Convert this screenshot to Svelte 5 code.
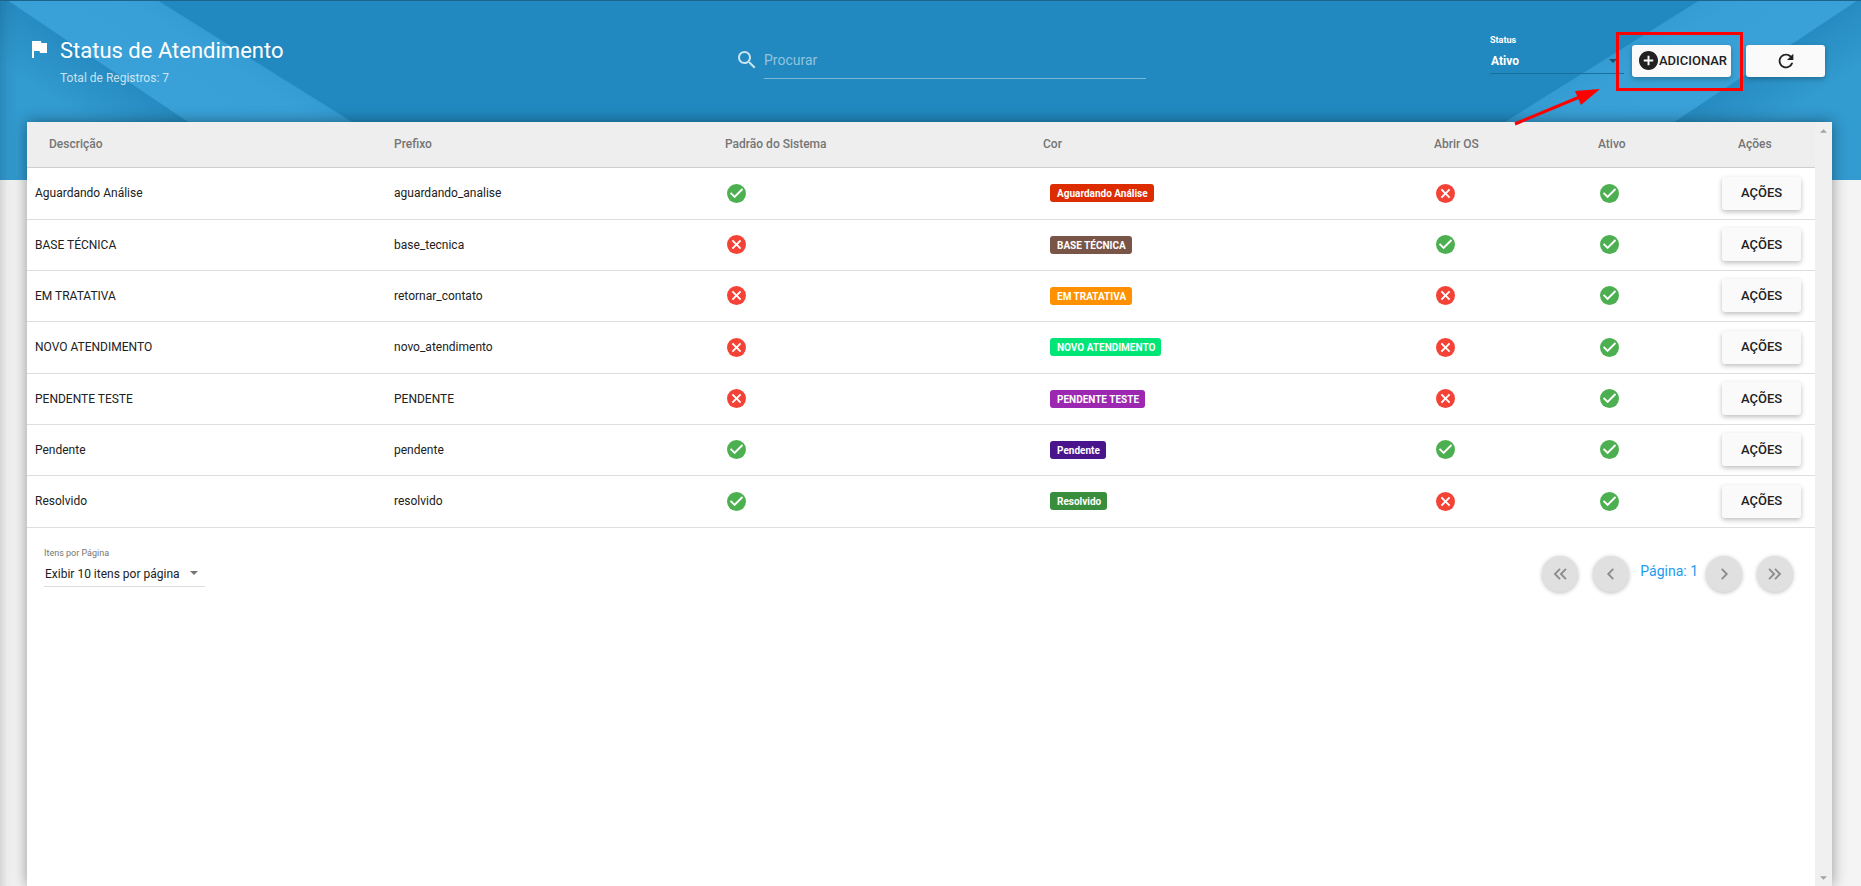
<script>
  const rows = [
    { name: 'Aguardando Análise', prefix: 'aguardando_analise', system: true, color: '#dd2c00', order: false, active: true },
    { name: 'BASE TÉCNICA', prefix: 'base_tecnica', system: false, color: '#795548', order: true, active: true },
    { name: 'EM TRATATIVA', prefix: 'retornar_contato', system: false, color: '#ff9100', order: false, active: true },
    { name: 'NOVO ATENDIMENTO', prefix: 'novo_atendimento', system: false, color: '#00e676', order: false, active: true },
    { name: 'PENDENTE TESTE', prefix: 'PENDENTE', system: false, color: '#9c27b0', order: false, active: true },
    { name: 'Pendente', prefix: 'pendente', system: true, color: '#4a148c', order: true, active: true },
    { name: 'Resolvido', prefix: 'resolvido', system: true, color: '#388e3c', order: false, active: true }
  ];
  const headings = ['Descrição', 'Prefixo', 'Padrão do Sistema', 'Cor', 'Abrir OS', 'Ativo', 'Ações'];
</script>

{#snippet flag(on)}
  {#if on}
    <svg class="state" viewBox="2 2 20 20" role="img" aria-label="Sim">
      <circle cx="12" cy="12" r="10" fill="#4caf50" />
      <path fill="#fff" d="M10 17l-5-5 1.41-1.41L10 14.17l7.59-7.59L19 8z" />
    </svg>
  {:else}
    <svg class="state" viewBox="2 2 20 20" role="img" aria-label="Não">
      <circle cx="12" cy="12" r="10" fill="#f44336" />
      <path fill="#fff" d="M17 15.59L15.59 17 12 13.41 8.41 17 7 15.59 10.59 12 7 8.41 8.41 7 12 10.59 15.59 7 17 8.41 13.41 12z" />
    </svg>
  {/if}
{/snippet}

<div class="page">
  <header>
    <svg class="ribbon left" viewBox="0 0 460 180" aria-hidden="true">
      <defs>
        <linearGradient id="foldL" gradientUnits="userSpaceOnUse" x1="98" y1="61" x2="66" y2="109">
          <stop offset="0" stop-color="#268bc0" />
          <stop offset="1" stop-color="#329bd0" />
        </linearGradient>
        <linearGradient id="bandL" gradientUnits="userSpaceOnUse" x1="98" y1="61" x2="156" y2="-30">
          <stop offset="0" stop-color="#39a1d7" />
          <stop offset="0.6" stop-color="#38a0d6" />
          <stop offset="1" stop-color="#2f98ce" />
        </linearGradient>
      </defs>
      <path d="M0 0H7L274 180H0Z" fill="url(#foldL)" />
      <path d="M7 0H157L445 180H274Z" fill="url(#bandL)" />
    </svg>
    <svg class="ribbon right" viewBox="0 0 460 180" aria-hidden="true">
      <defs>
        <linearGradient id="foldR" gradientUnits="userSpaceOnUse" x1="364" y1="61" x2="396" y2="109">
          <stop offset="0" stop-color="#268bc0" />
          <stop offset="1" stop-color="#329bd0" />
        </linearGradient>
        <linearGradient id="bandR" gradientUnits="userSpaceOnUse" x1="364" y1="61" x2="306" y2="-30">
          <stop offset="0" stop-color="#39a1d7" />
          <stop offset="0.6" stop-color="#38a0d6" />
          <stop offset="1" stop-color="#2f98ce" />
        </linearGradient>
      </defs>
      <path d="M460 0H457L186 180H460Z" fill="url(#foldR)" />
      <path d="M457 0H299L11 180H186Z" fill="url(#bandR)" />
    </svg>

    <div class="toolbar">
      <div class="heading">
        <svg class="icon" viewBox="0 0 24 24" aria-hidden="true"><path d="M14.4 6L14 4H5v17h2v-7h5.6l.4 2h7V6z" /></svg>
        <div>
          <h1>Status de Atendimento</h1>
          <p>Total de Registros: 7</p>
        </div>
      </div>

      <label class="search">
        <svg class="icon" viewBox="0 0 24 24" role="img" aria-label="Procurar">
          <path d="M15.5 14h-.79l-.28-.27C15.41 12.59 16 11.11 16 9.5 16 5.91 13.09 3 9.5 3S3 5.91 3 9.5 5.91 16 9.5 16c1.61 0 3.09-.59 4.23-1.57l.27.28v.79l5 4.99L20.49 19l-4.99-5zm-6 0C7.01 14 5 11.99 5 9.5S7.01 5 9.5 5 14 7.01 14 9.5 11.99 14 9.5 14z" />
        </svg>
        <input type="search" placeholder="Procurar" />
      </label>

      <div class="tools">
        <div class="field status">
          <label for="status">Status</label>
          <select id="status"><option>Ativo</option></select>
          <svg class="caret" viewBox="0 0 8 4" aria-hidden="true"><path d="M0 0h8L4 4z" /></svg>
        </div>
        <div class="marked">
          <button class="btn add">
            <svg viewBox="2 2 20 20" aria-hidden="true"><path d="M12 2C6.48 2 2 6.48 2 12s4.48 10 10 10 10-4.48 10-10S17.52 2 12 2zm5 11h-4v4h-2v-4H7v-2h4V7h2v4h4v2z" /></svg>ADICIONAR
          </button>
          <span class="frame"></span>
          <svg class="arrow" viewBox="0 0 90 40" aria-hidden="true">
            <path d="M3 36L70 8" stroke="#f00" stroke-width="3" />
            <path d="M88 1L63 3L69 17Z" fill="#f00" />
          </svg>
        </div>
        <button class="btn refresh" aria-label="Atualizar">
          <svg viewBox="0 0 24 24" aria-hidden="true"><path d="M17.65 6.35C16.2 4.9 14.21 4 12 4c-4.42 0-7.99 3.58-7.99 8s3.57 8 7.99 8c3.73 0 6.84-2.55 7.73-6h-2.08c-.82 2.33-3.04 4-5.65 4-3.31 0-6-2.69-6-6s2.69-6 6-6c1.66 0 3.14.69 4.22 1.78L13 11h7V4l-2.35 2.35z" /></svg>
        </button>
      </div>
    </div>
  </header>

  <main>
    <div class="content">
      <table>
        <colgroup>
          <col class="c1" /><col class="c2" /><col class="c3" /><col class="c4" /><col class="c5" /><col class="c6" /><col class="c7" />
        </colgroup>
        <thead>
          <tr>{#each headings as h}<th scope="col">{h}</th>{/each}</tr>
        </thead>
        <tbody>
          {#each rows as row}
            <tr>
              <td>{row.name}</td>
              <td>{row.prefix}</td>
              <td class="mark">{@render flag(row.system)}</td>
              <td class="tag"><span class="badge" style="background:{row.color}">{row.name}</span></td>
              <td class="mark">{@render flag(row.order)}</td>
              <td class="mark">{@render flag(row.active)}</td>
              <td><button class="btn action">AÇÕES</button></td>
            </tr>
          {/each}
        </tbody>
      </table>

      <footer>
        <div class="field size">
          <label for="size">Itens por Página</label>
          <select id="size"><option>Exibir 10 itens por página</option></select>
          <svg class="caret" viewBox="0 0 8 4" aria-hidden="true"><path d="M0 0h8L4 4z" /></svg>
        </div>
        <nav aria-label="Paginação">
          <button class="round" aria-label="Primeira"><svg viewBox="0 0 24 24"><path d="M12 6.5L6.5 12l5.5 5.5M18.500 6.500L13 12l5.500 5.500" /></svg></button>
          <button class="round" aria-label="Anterior"><svg viewBox="0 0 24 24"><path d="M14.500 6.500L9 12l5.500 5.500" /></svg></button>
          <span>Página: 1</span>
          <button class="round" aria-label="Próxima"><svg viewBox="0 0 24 24"><path d="M9.500 6.500L15 12l-5.500 5.500" /></svg></button>
          <button class="round" aria-label="Última"><svg viewBox="0 0 24 24"><path d="M5.500 6.500L11 12l-5.500 5.500M12 6.500L17.500 12L12 17.500" /></svg></button>
        </nav>
      </footer>
    </div>
    <div class="scroll" aria-hidden="true">
      <svg viewBox="0 0 8 4"><path d="M4 0l4 4H0z" /></svg>
      <svg viewBox="0 0 8 4"><path d="M0 0h8L4 4z" /></svg>
    </div>
  </main>
</div>

<style>
  :global(body) {
    margin: 0;
    background: #f4f4f4;
  }
  .page {
    min-height: 100vh;
    display: flex;
    flex-direction: column;
    box-sizing: border-box;
    overflow: hidden;
    background: linear-gradient(90deg, #d6d6d6 0, #ebebeb 7px, #f2f2f2 14px, #f4f4f4 20px);
    font-family: Roboto, sans-serif;
    font-size: 12px;
    color: #212121;
  }
  button, input, select {
    font-family: inherit;
    margin: 0;
  }
  header {
    position: relative;
    height: 180px;
    background: #2189bf;
  }
  header::after {
    content: '';
    position: absolute;
    inset: 0;
    pointer-events: none;
    border-top: 1px solid #1b658c;
    background: linear-gradient(90deg, rgba(0, 40, 70, 0.16) 0, rgba(0, 40, 70, 0.05) 8px, transparent 18px);
  }
  .ribbon {
    position: absolute;
    top: 0;
    width: 460px;
    height: 180px;
  }
  .left { left: 0; }
  .right { right: 0; }
  .toolbar {
    position: relative;
    z-index: 2;
    height: 122px;
    box-sizing: border-box;
    padding: 0 36px 0 27px;
    display: grid;
    grid-template-columns: 708fr 411fr 679fr;
    align-items: center;
  }
  .icon {
    flex: none;
    width: 24px;
    height: 24px;
    fill: #fff;
  }
  .heading {
    display: flex;
    gap: 9px;
    color: #fff;
  }
  h1 {
    margin: 0;
    font-size: 22px;
    line-height: 28px;
    font-weight: 400;
  }
  p {
    margin: 5px 0 0;
    line-height: 16px;
    color: rgba(255, 255, 255, 0.75);
  }
  .search {
    display: flex;
    align-items: center;
    gap: 5px;
    margin-bottom: 2px;
  }
  .search .icon { opacity: 0.75; }
  .search input {
    flex: 1;
    min-width: 0;
    height: 38px;
    box-sizing: border-box;
    border: 0;
    border-bottom: 1px solid #7ab8d9;
    padding: 0;
    outline: 0;
    border-radius: 0;
    background: none;
    appearance: none;
    font-size: 14px;
    color: #fff;
  }
  .search input::placeholder { color: #90c4df; }
  .tools {
    display: flex;
    justify-content: flex-end;
    align-items: center;
    gap: 15px;
  }
  .field {
    position: relative;
    display: flex;
    flex-direction: column;
    box-sizing: border-box;
  }
  .field label {
    font-size: 9px;
    line-height: 12px;
  }
  .field select {
    appearance: none;
    border: 0;
    border-radius: 0;
    outline: 0;
    padding: 2px 0 0 1px;
    background: none;
    font-size: 12px;
    color: inherit;
  }
  .caret {
    position: absolute;
    width: 8px;
    height: 4px;
  }
  .status {
    width: 134px;
    margin: 0 -7px 14px 0;
    color: #fff;
  }
  .status label { font-weight: 700; }
  .status select {
    height: 28px;
    border-bottom: 1px solid #1b6f9d;
    font-weight: 700;
  }
  .status .caret {
    right: 7px;
    bottom: 11px;
    fill: #1c4e69;
  }
  .marked {
    position: relative;
  }
  .frame {
    position: absolute;
    inset: -13px -12px -14px -16px;
    border: 3px solid #f00;
    pointer-events: none;
  }
  .arrow {
    position: absolute;
    left: -120px;
    top: 43px;
    width: 90px;
    height: 40px;
    pointer-events: none;
    fill: none;
  }
  .btn {
    display: flex;
    align-items: center;
    justify-content: center;
    height: 32px;
    border: 0;
    border-radius: 3px;
    padding: 0 0 1px;
    background: #fafafa;
    color: #212121;
    font-size: 13px;
    font-weight: 500;
    box-shadow: 0 2px 5px rgba(0, 0, 0, 0.26);
  }
  .btn svg { fill: #212121; }
  .add {
    width: 99px;
    padding-left: 3px;
    gap: 1px;
  }
  .add svg {
    width: 19px;
    height: 19px;
  }
  .refresh { width: 79px; }
  .refresh svg {
    width: 22px;
    height: 22px;
  }
  main {
    position: relative;
    flex: 1;
    display: flex;
    margin: -58px 29px 0 27px;
    background: #fff;
    box-shadow: 0 0 14px rgba(0, 0, 0, 0.4);
  }
  .content {
    flex: 1;
    min-width: 0;
  }
  table {
    width: 100%;
    table-layout: fixed;
    border-collapse: separate;
    border-spacing: 0;
  }
  .c1 { width: 359px; }
  .c2 { width: 331px; }
  .c3 { width: 318px; }
  .c4 { width: 391px; }
  .c5 { width: 164px; }
  .c6 { width: 124px; }
  .c7 { width: 101px; }
  th {
    height: 43px;
    padding: 0 8px 2px;
    background: #eee;
    border-bottom: 1px solid #cfcfcf;
    color: #757575;
    font-weight: 500;
    text-align: left;
  }
  th:first-child { padding-left: 22px; }
  th:last-child { padding-left: 24px; }
  td {
    height: 49px;
    padding: 0 8px 1px;
    border-bottom: 1px solid #dedede;
  }
  tr:nth-child(3n + 1) td { height: 50px; }
  .mark { padding-left: 10px; }
  .tag { padding-left: 15px; }
  .state {
    display: block;
    width: 19px;
    height: 19px;
  }
  .badge {
    display: inline-block;
    padding: 1px 6px 0 7px;
    border-radius: 3px;
    color: #fff;
    font-size: 10px;
    line-height: 17px;
    font-weight: 700;
    vertical-align: middle;
  }
  .action {
    width: 79px;
    height: 33px;
  }
  footer {
    display: flex;
    justify-content: space-between;
    align-items: flex-start;
    padding: 19px 22px 0 17px;
  }
  .size {
    width: 161px;
    color: #212121;
  }
  .size label { color: #757575; }
  .size select {
    height: 28px;
    border-bottom: 1px solid #dcdcdc;
  }
  .size .caret {
    right: 7px;
    bottom: 12px;
    fill: #757575;
  }
  nav {
    display: flex;
    gap: 15px;
    margin-top: 9px;
  }
  nav span {
    margin: 0 -7px 0 -4px;
    line-height: 30px;
    font-size: 14px;
    color: #1a9cf0;
  }
  .round {
    display: grid;
    place-items: center;
    width: 36px;
    height: 36px;
    padding: 0;
    border: 0;
    border-radius: 50%;
    background: #e0e0e0;
    box-shadow: 0 1px 4px rgba(0, 0, 0, 0.26);
  }
  .round svg {
    width: 22px;
    height: 22px;
    fill: none;
    stroke: #8c8c8c;
    stroke-width: 2;
  }
  .scroll {
    display: flex;
    flex-direction: column;
    justify-content: space-between;
    align-items: center;
    width: 17px;
    box-sizing: border-box;
    padding: 7px 0 6px;
    background: #f0f0f0;
  }
  .scroll svg {
    width: 7px;
    height: 4px;
    fill: #a3a3a3;
  }
</style>
